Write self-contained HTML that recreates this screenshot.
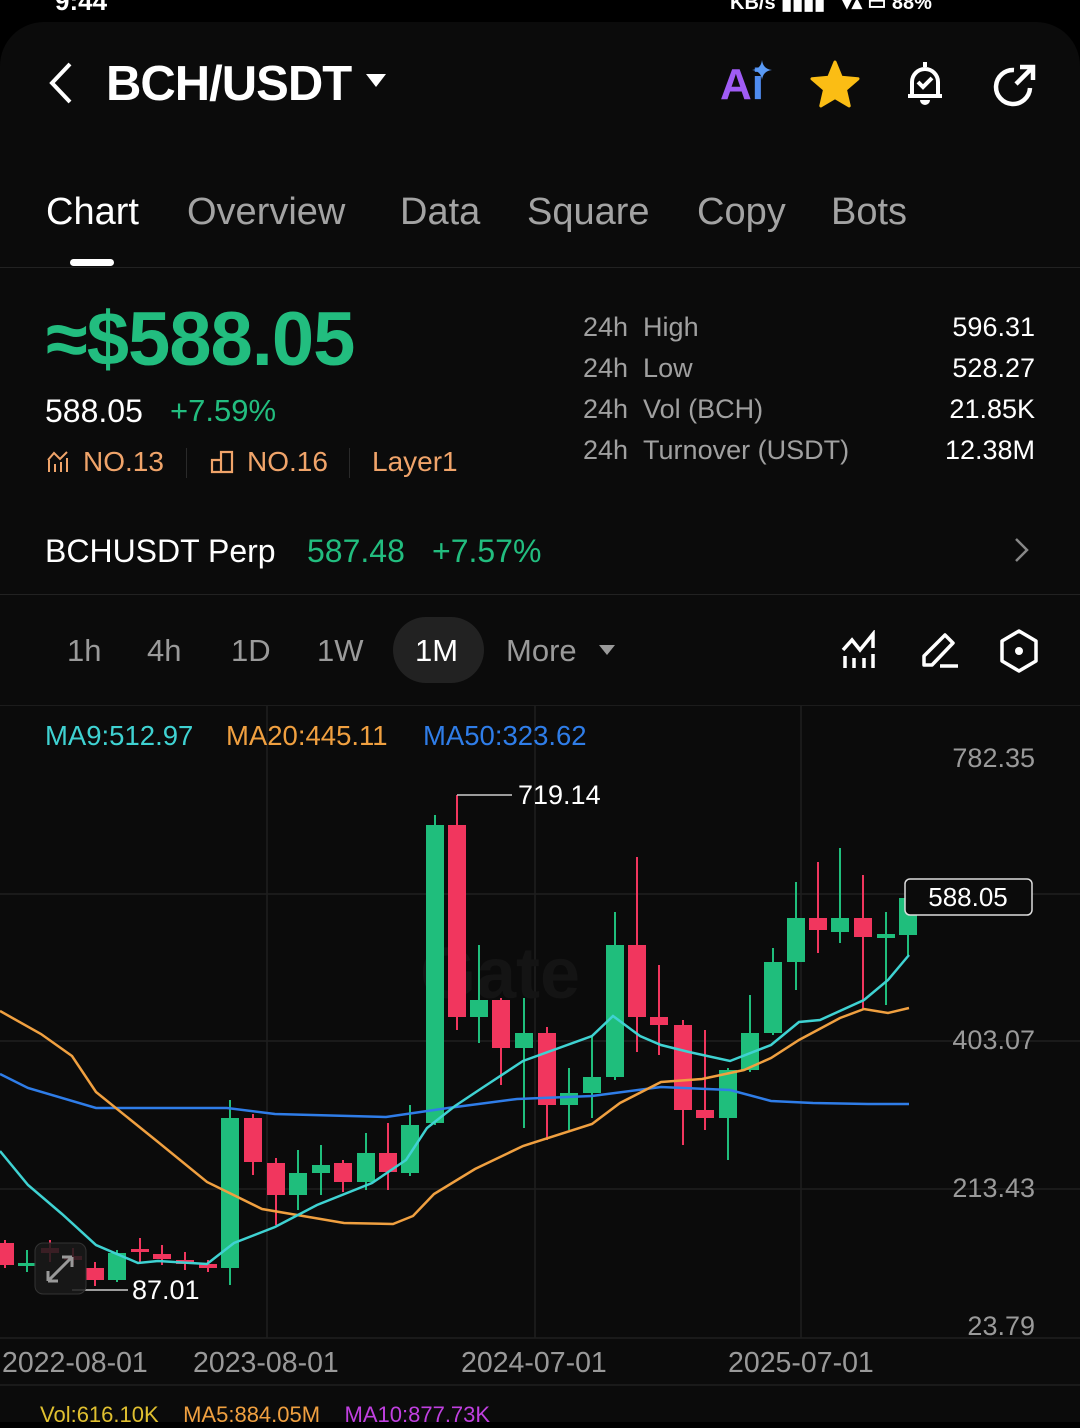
<!DOCTYPE html>
<html><head><meta charset="utf-8"><style>
*{margin:0;padding:0;box-sizing:border-box}
body{width:1080px;height:1407px;background:#000;overflow:hidden;font-family:"Liberation Sans",sans-serif;color:#fff;position:relative}
.card{position:absolute;left:0;top:22px;width:1080px;height:1400px;background:#0b0b0b;border-radius:44px 44px 0 0}
.a{position:absolute;white-space:nowrap}
.tab{position:absolute;top:191px;font-size:38px;color:#a3a3a3}
.g{color:#22bd7f}
.o{color:#f0a46a}
.lbl{color:#a0a0a0;font-size:27px}
.val{font-size:27px;color:#fff;right:45px}
.tf{position:absolute;top:633px;font-size:31px;color:#9a9a9a}
</style></head><body>
<div class="a" style="left:55px;top:-14px;font-size:26px;font-weight:bold">9:44</div>
<div class="a" style="left:730px;top:-10px;font-size:20px;font-weight:bold">KB/s ▮▮▮▮ &nbsp; ▾▴ ▭ 88%</div>
<div class="card"></div>

<svg class="a" style="left:44px;top:60px" width="32" height="46"><path d="M26 4 L8 23 L26 42" stroke="#fff" stroke-width="4" fill="none"/></svg>
<div class="a" style="left:106px;top:56px;font-size:49px;font-weight:bold;letter-spacing:-1px">BCH/USDT</div>
<svg class="a" style="left:366px;top:74px" width="20" height="14"><path d="M0 0 H20 L10 13Z" fill="#fff"/></svg>

<div class="a" style="left:720px;top:60px;font-size:44px;font-weight:bold;color:#a05cf5">A<span style="color:#4f8cf0">i</span></div>
<svg class="a" style="left:752px;top:60px" width="20" height="20"><path d="M10 0 Q11 9 20 10 Q11 11 10 20 Q9 11 0 10 Q9 9 10 0Z" fill="#5a9af5"/></svg>
<svg class="a" style="left:810px;top:60px" width="50" height="48" viewBox="0 0 24 23"><path d="M12 1 L15 8.3 L23 9 L17 14.2 L18.8 22 L12 18 L5.2 22 L7 14.2 L1 9 L9 8.3Z" fill="#fbbd14" stroke="#fbbd14" stroke-linejoin="round" stroke-width="1.5"/></svg>
<svg class="a" style="left:900px;top:58px" width="50" height="52" viewBox="0 0 50 52"><path d="M8 38 H42 M12 38 V24 A13 13 0 0 1 38 24 V38" stroke="#fff" stroke-width="4" fill="none"/><path d="M25 4 V9" stroke="#fff" stroke-width="4"/><path d="M20 42 A5 5 0 0 0 30 42Z" fill="#fff"/><path d="M18 24 L23 29 L32 20" stroke="#fff" stroke-width="4" fill="none"/></svg>
<svg class="a" style="left:990px;top:60px" width="50" height="50" viewBox="0 0 50 50"><path d="M40 28 A17 17 0 1 1 24 10" stroke="#fff" stroke-width="4.5" fill="none"/><path d="M26 24 L42 8 M30 7 H43 V20" stroke="#fff" stroke-width="4.5" fill="none"/></svg>

<div class="tab" style="left:46px;color:#fff">Chart</div>
<div class="tab" style="left:187px">Overview</div>
<div class="tab" style="left:400px">Data</div>
<div class="tab" style="left:527px">Square</div>
<div class="tab" style="left:697px">Copy</div>
<div class="tab" style="left:831px">Bots</div>
<div class="a" style="left:70px;top:259px;width:44px;height:7px;border-radius:4px;background:#fff"></div>
<div class="a" style="left:0;top:267px;width:1080px;height:1px;background:#222"></div>

<div class="a g" style="left:46px;top:296px;font-size:76px;font-weight:bold;letter-spacing:-1px">≈$588.05</div>
<div class="a" style="left:45px;top:393px;font-size:32px">588.05</div>
<div class="a g" style="left:170px;top:393px;font-size:31px">+7.59%</div>
<svg class="a" style="left:46px;top:450px" width="24" height="24"><path d="M3 22 V10 M9 22 V14 M15 22 V12 M21 22 V8 M2 10 L8 3 L14 9 L21 2" stroke="#f0a46a" stroke-width="2" fill="none"/></svg>
<div class="a o" style="left:83px;top:446px;font-size:28px">NO.13</div>
<div class="a" style="left:186px;top:448px;width:1px;height:30px;background:#2a2a2a"></div>
<svg class="a" style="left:210px;top:450px" width="24" height="24"><path d="M2 22 H22 V2 H11 V10 H2Z M11 10 V22" stroke="#f0a46a" stroke-width="2.2" fill="none"/></svg>
<div class="a o" style="left:247px;top:446px;font-size:28px">NO.16</div>
<div class="a" style="left:349px;top:448px;width:1px;height:30px;background:#2a2a2a"></div>
<div class="a o" style="left:372px;top:446px;font-size:28px">Layer1</div>

<div class="a lbl" style="left:583px;top:312px">24h&nbsp;&nbsp;High</div>
<div class="a lbl" style="left:583px;top:353px">24h&nbsp;&nbsp;Low</div>
<div class="a lbl" style="left:583px;top:394px">24h&nbsp;&nbsp;Vol (BCH)</div>
<div class="a lbl" style="left:583px;top:435px">24h&nbsp;&nbsp;Turnover (USDT)</div>
<div class="a val" style="top:312px">596.31</div>
<div class="a val" style="top:353px">528.27</div>
<div class="a val" style="top:394px">21.85K</div>
<div class="a val" style="top:435px">12.38M</div>

<div class="a" style="left:45px;top:533px;font-size:32px">BCHUSDT Perp</div>
<div class="a g" style="left:307px;top:533px;font-size:32px">587.48</div>
<div class="a g" style="left:432px;top:533px;font-size:32px">+7.57%</div>
<svg class="a" style="left:1012px;top:536px" width="20" height="28"><path d="M4 3 L15 14 L4 25" stroke="#888" stroke-width="2.5" fill="none"/></svg>
<div class="a" style="left:0;top:594px;width:1080px;height:1px;background:#222"></div>

<div class="tf" style="left:67px">1h</div>
<div class="tf" style="left:147px">4h</div>
<div class="tf" style="left:231px">1D</div>
<div class="tf" style="left:317px">1W</div>
<div class="a" style="left:393px;top:617px;width:91px;height:66px;border-radius:33px;background:#222"></div>
<div class="tf" style="left:415px;color:#fff">1M</div>
<div class="tf" style="left:506px">More</div>
<svg class="a" style="left:599px;top:645px" width="16" height="11"><path d="M0 0 H16 L8 10Z" fill="#9a9a9a"/></svg>
<svg class="a" style="left:840px;top:630px" width="40" height="40"><path d="M5 38 V26 M14 38 V28 M24 38 V28 M33 38 V24 M3 20 L12 10 L20 20 L33 4 V18" stroke="#fff" stroke-width="3.5" fill="none"/></svg>
<svg class="a" style="left:920px;top:630px" width="40" height="40"><path d="M4 35 V26 L25 5 L33 13 L12 35Z M20 36 H38" stroke="#fff" stroke-width="3.5" fill="none" stroke-linejoin="round"/></svg>
<svg class="a" style="left:1000px;top:628px" width="40" height="46"><path d="M19 3 L36 13 V33 L19 43 L2 33 V13Z" stroke="#fff" stroke-width="3.5" fill="none" stroke-linejoin="round"/><circle cx="19" cy="23" r="4" fill="#fff"/></svg>
<div class="a" style="left:0;top:705px;width:1080px;height:1px;background:#1c1c1c"></div>

<svg class="a" style="left:0;top:0" width="1080" height="1407">
<g stroke="#1f1f1f" stroke-width="1.5">
<line x1="0" y1="894" x2="1080" y2="894"/><line x1="0" y1="1041" x2="1080" y2="1041"/><line x1="0" y1="1189" x2="1080" y2="1189"/>
<line x1="267" y1="706" x2="267" y2="1338"/><line x1="535" y1="706" x2="535" y2="1338"/><line x1="801" y1="706" x2="801" y2="1338"/>
<line x1="0" y1="1338" x2="1080" y2="1338"/><line x1="0" y1="1385" x2="1080" y2="1385"/>
</g>
<text x="420" y="998" font-size="72" font-weight="bold" fill="#141414" font-family="Liberation Sans">Gate</text>
<g id="c"></g>
<polyline fill="none" stroke="#2f7de8" stroke-width="2.5" points="0,1074 28,1088 96,1108 227,1108 275,1114 386,1117 448,1108 517,1099 592,1096 661,1087 730,1090 771,1101 813,1103 868,1104 909,1104"/>
<polyline fill="none" stroke="#f0a040" stroke-width="2.5" points="0,1011 41,1034 72,1056 96,1092 158,1142 207,1182 262,1209 344,1223 393,1224 413,1216 434,1194 475,1169 523,1146 592,1124 620,1103 661,1082 702,1079 744,1070 771,1058 799,1040 840,1018 864,1009 888,1013 909,1008"/>
<polyline fill="none" stroke="#3fd2d2" stroke-width="2.5" points="0,1151 28,1185 62,1214 96,1245 138,1263 158,1261 207,1264 234,1243 275,1227 317,1205 372,1183 406,1160 427,1128 455,1106 482,1088 523,1061 592,1036 613,1016 640,1036 661,1045 689,1052 730,1061 771,1045 799,1022 820,1020 864,1000 888,980 909,955"/>
<path d="M457 795 V795 H512" stroke="#ccc" stroke-width="1.5" fill="none"/>
<path d="M72 1290 H128" stroke="#ccc" stroke-width="1.5" fill="none"/>
<g font-family="Liberation Sans" font-size="27">
<text x="518" y="804" fill="#fff">719.14</text>
<text x="132" y="1299" fill="#fff">87.01</text>
<text x="1035" y="767" fill="#9a9a9a" text-anchor="end">782.35</text>
<text x="1035" y="1049" fill="#9a9a9a" text-anchor="end">403.07</text>
<text x="1035" y="1197" fill="#9a9a9a" text-anchor="end">213.43</text>
<text x="1035" y="1335" fill="#9a9a9a" text-anchor="end">23.79</text>
</g>
<g font-family="Liberation Sans" font-size="28.5" fill="#9a9a9a">
<text x="2" y="1372">2022-08-01</text>
<text x="193" y="1372">2023-08-01</text>
<text x="461" y="1372">2024-07-01</text>
<text x="728" y="1372">2025-07-01</text>
</g>
<g font-family="Liberation Sans" font-size="27.5">
<text x="45" y="745" fill="#3fd2d2">MA9:512.97</text>
<text x="226" y="745" fill="#f0a040">MA20:445.11</text>
<text x="423" y="745" fill="#2f7de8">MA50:323.62</text>
</g>
<rect x="905" y="879" width="127" height="36" rx="5" fill="#0b0b0b" stroke="#ddd" stroke-width="1.5"/>
<text x="968" y="906" font-size="26" fill="#fff" text-anchor="middle" font-family="Liberation Sans">588.05</text>
<rect x="35" y="1243" width="51" height="51" rx="8" fill="#1a1a1a" fill-opacity=".85" stroke="#333"/>
<path d="M48 1281 L72 1257 M48 1281 V1271 M48 1281 H58 M72 1257 V1267 M72 1257 H62" stroke="#999" stroke-width="3" fill="none"/>
</svg>
<div class="a" style="left:40px;top:1402px;font-size:22px;color:#e0c030">Vol:616.10K &nbsp;&nbsp; <span style="color:#f0a040">MA5:884.05M</span> &nbsp;&nbsp; <span style="color:#c040e0">MA10:877.73K</span></div>
<script>
var d=[[5,'r',1243,1265,1240,1268],[27,'g',1263,1266,1250,1272],[50,'r',1248,1253,1240,1262],[73,'r',1256,1260,1248,1265],[95,'r',1268,1280,1262,1286],[117,'g',1253,1280,1250,1282],[140,'r',1249,1252,1238,1262],[162,'r',1254,1259,1245,1265],[185,'r',1260,1264,1252,1270],[208,'r',1264,1268,1260,1272],[230,'g',1118,1268,1100,1285],[253,'r',1118,1162,1114,1175],[276,'r',1163,1195,1158,1225],[298,'g',1173,1195,1150,1210],[321,'g',1165,1173,1145,1195],[343,'r',1163,1182,1160,1192],[366,'g',1153,1182,1133,1190],[388,'r',1153,1172,1123,1190],[410,'g',1125,1173,1105,1176],[435,'g',825,1123,815,1125],[457,'r',825,1017,795,1030],[479,'g',1000,1017,945,1043],[501,'r',1000,1048,998,1085],[524,'g',1033,1048,998,1128],[547,'r',1033,1105,1027,1140],[569,'g',1093,1105,1068,1130],[592,'g',1077,1093,1037,1118],[615,'g',945,1077,912,1080],[637,'r',945,1017,857,1052],[659,'r',1017,1025,965,1055],[683,'r',1025,1110,1020,1145],[705,'r',1110,1118,1030,1130],[728,'g',1070,1118,1068,1160],[750,'g',1033,1070,995,1072],[773,'g',962,1033,948,1035],[796,'g',918,962,882,990],[818,'r',918,930,862,953],[840,'g',918,932,848,943],[863,'r',918,937,875,1010],[886,'g',934,938,912,1005],[908,'g',898,935,897,955]];
var s='';d.forEach(function(c){var col=c[1]=='g'?'#1fbe7c':'#f1365e';s+='<line x1="'+c[0]+'" x2="'+c[0]+'" y1="'+c[4]+'" y2="'+c[5]+'" stroke="'+col+'" stroke-width="2"/><rect x="'+(c[0]-9)+'" y="'+c[2]+'" width="18" height="'+Math.max(3,c[3]-c[2])+'" fill="'+col+'"/>';});
document.getElementById('c').innerHTML=s;
</script>
</body></html>
